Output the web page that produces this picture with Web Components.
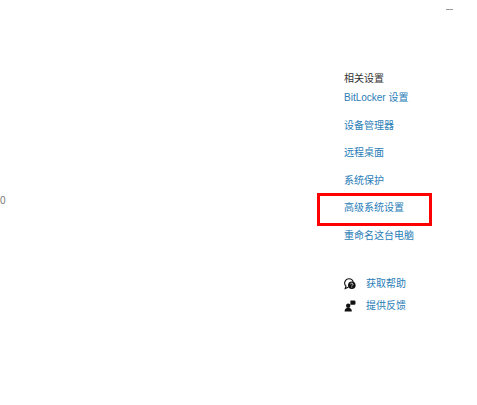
<!DOCTYPE html>
<html lang="zh"><head><meta charset="utf-8"><title>相关设置</title>
<style>
html,body{margin:0;height:100%;background:#fff;overflow:hidden}
body{font-family:"Liberation Sans","Noto Sans CJK SC",sans-serif}
</style></head><body>
<settings-page>
  <settings-link slot="links">BitLocker 设置</settings-link>
  <settings-link slot="links">设备管理器</settings-link>
  <settings-link slot="links">远程桌面</settings-link>
  <settings-link slot="links">系统保护</settings-link>
  <settings-link slot="links" marked>高级系统设置</settings-link>
  <settings-link slot="links">重命名这台电脑</settings-link>
  <help-link slot="help" icon="help">获取帮助</help-link>
  <help-link slot="help" icon="feedback">提供反馈</help-link>
</settings-page>
<script>
class SettingsPage extends HTMLElement{
  constructor(){super();this.attachShadow({mode:"open"}).innerHTML=`
  <style>
  :host{display:grid;grid-template-columns:344px 1fr;grid-template-rows:1fr;height:405px;box-sizing:border-box;position:relative}
  .left{display:flex;align-items:center;font:10px/10px "Liberation Sans",sans-serif;color:#777;padding-bottom:3px}
  .min{position:absolute;left:446px;top:9px;width:7px;height:1px;background:#9a9a9a}
  .right{padding-top:72px;display:flex;flex-direction:column}
  h2{margin:0 0 5px;font-weight:400;font-size:10px;line-height:14px;color:#333}
  .links{display:flex;flex-direction:column;gap:13.6px}
  .help{display:flex;flex-direction:column;gap:8px;margin-top:34px}
  </style>
  <div class="left">0</div>
  <div class="min"></div>
  <div class="right">
    <h2>相关设置</h2>
    <div class="links"><slot name="links"></slot></div>
    <div class="help"><slot name="help"></slot></div>
  </div>`}
}
class SettingsLink extends HTMLElement{
  constructor(){super();this.attachShadow({mode:"open"}).innerHTML=`
  <style>
  :host{display:block;position:relative;font-size:10px;line-height:14px;color:#2a7db8;white-space:nowrap}
  .mark{display:none;position:absolute;left:-27px;top:-8.4px;width:115px;height:33px;box-sizing:border-box;border:3px solid #ff0000}
  :host([marked]) .mark{display:block}
  </style><slot></slot><span class="mark"></span>`}
}
const ICONS={
 help:`<path d="M5 .8a4.3 4.3 0 0 0-3 7.4L1.2 10.6 4.3 9.2" fill="none" stroke="#111" stroke-width="1.1"/><path d="M5 .8a4.3 4.3 0 0 1 4.2 3.2" fill="none" stroke="#111" stroke-width="1.1"/><circle cx="7.8" cy="7.2" r="3.8" fill="#111"/><path d="M6.6 6.3q0-1.2 1.2-1.2T9 6.3q0 .8-1.2 1.3v.6" fill="none" stroke="#fff" stroke-width=".7"/><rect x="7.4" y="8.7" width=".8" height=".8" fill="#fff"/>`,
 feedback:`<path d="M6.4 0.6h3.8a1.3 1.3 0 0 1 1.3 1.3v1.6a1.3 1.3 0 0 1-1.3 1.3H6.4z" fill="#111"/><circle cx="4.2" cy="5.8" r="2.2" fill="#111"/><path d="M.6 11.4q0-3.6 3.6-3.6t3.6 3.6z" fill="#111"/>`
};
class HelpLink extends HTMLElement{
  constructor(){super();this.attachShadow({mode:"open"}).innerHTML=`
  <style>
  :host{display:flex;align-items:center;gap:10px;font-size:10px;line-height:14px;color:#2a7db8;white-space:nowrap}
  svg{width:12px;height:12px;flex:none}
  </style><svg viewBox="0 0 12 12">${ICONS[this.getAttribute("icon")]||""}</svg><slot></slot>`}
}
customElements.define("settings-page",SettingsPage);
customElements.define("settings-link",SettingsLink);
customElements.define("help-link",HelpLink);
</script>
</body></html>
